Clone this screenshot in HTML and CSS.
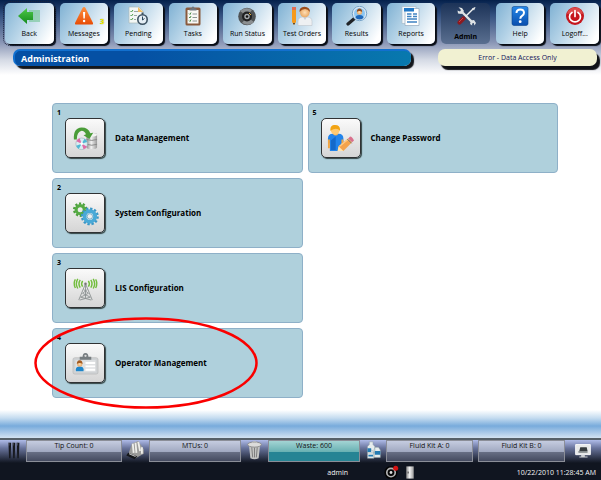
FILE: index.html
```html
<!DOCTYPE html>
<html lang="en">
<head>
<meta charset="utf-8">
<title>Administration</title>
<link rel="stylesheet" href="styles.css">
</head>
<body>
<svg class="defs" aria-hidden="true">
  <defs>
    <linearGradient id="green" x1="0" y1="0" x2="0" y2="1"><stop offset="0" stop-color="#4fc94a"/><stop offset="1" stop-color="#138a1c"/></linearGradient>
    <linearGradient id="orange" x1="0" y1="0" x2="0" y2="1"><stop offset="0" stop-color="#ff9140"/><stop offset="1" stop-color="#e84c05"/></linearGradient>
    <linearGradient id="blue" x1="0" y1="0" x2="0" y2="1"><stop offset="0" stop-color="#2588e8"/><stop offset="1" stop-color="#0a4fae"/></linearGradient>
    <linearGradient id="steel" x1="0" y1="0" x2="1" y2="0"><stop offset="0" stop-color="#8d8d8d"/><stop offset=".45" stop-color="#f2f2f2"/><stop offset="1" stop-color="#999"/></linearGradient>
    <radialGradient id="skin"><stop offset="0" stop-color="#ffdfb5"/><stop offset="1" stop-color="#e9a864"/></radialGradient>
  </defs>
</svg>
<div class="app">
  <header class="top">
    <nav class="toolbar" aria-label="Main">
      <button class="tool focused">
        <svg viewBox="0 0 24 20"><path d="M12 4h11v12H12z" fill="#7fc9a0" opacity=".7"/><path d="M1 10 10 2v4h6v8h-6v4z" fill="url(#green)"/></svg>
        <span>Back</span>
      </button>
      <button class="tool">
        <svg viewBox="0 0 24 20"><path d="M12 1q1 0 1.500 1L21 17q.5 1.500-1 1.500H4Q2.500 18.500 3 17L10.500 2q.5-1 1.500-1z" fill="url(#orange)"/><path d="M11 6h2.200l-.4 6.500h-1.400z" fill="#fff"/><circle cx="12.100" cy="15" r="1.200" fill="#fff"/></svg>
        <span>Messages</span>
        <b class="badge">3</b>
      </button>
      <button class="tool">
        <svg viewBox="0 0 24 20"><path d="M3 1h10l4 4v12H3z" fill="#f3f7f5" stroke="#a9b8b8" stroke-width=".7"/><path d="m12 1 5 5h-5z" fill="#f0bd62"/><path d="m4.500 5 1 1 1.500-2M4.500 9l1 1L7 8M4.500 13l1 1L7 12" stroke="#4a9c48" fill="none"/><path d="M8 5.500h4M8 9.500h3M8 13.500h2" stroke="#9aa5a5"/><path d="M15.500 6.500h2v2h-2z" fill="#3d5262"/><circle cx="16.500" cy="13.500" r="4.700" fill="#e5eef5" stroke="#3d5262" stroke-width="1.600"/><path d="M16.500 10.500v3.500l2-1.500" stroke="#28465c" fill="none"/></svg>
        <span>Pending</span>
      </button>
      <button class="tool">
        <svg viewBox="0 0 24 20"><rect x="4.500" y="1.500" width="15" height="18" rx="1.500" fill="#8a5a3c"/><path d="M6.500 4h11v13.500h-11z" fill="#f8f8f4"/><path d="M8.500 4.500v-2h2q0-2 1.500-2t1.500 2h2v2z" fill="#70767c"/><path d="m8 7.500 1 1 1-2m-2 4.500 1 1 1-2m-2 4.500 1 1 1-2" stroke="#4c8f4a" fill="none"/><path d="M11.500 8H16m-4.500 3.500H16M11.500 15H16" stroke="#8c9494"/></svg>
        <span>Tasks</span>
      </button>
      <button class="tool">
        <svg viewBox="0 0 24 20"><circle cx="12" cy="10.500" r="8.800" fill="#4f5355"/><path d="M5 5q6-5 12-1l-5 6zM7 17l5-6 7 5q-5 5-12 1z" fill="#8c9092"/><circle cx="12" cy="10.500" r="5" fill="#202122"/><circle cx="12" cy="10.500" r="2.700" fill="#a8acae"/><circle cx="12" cy="10.500" r="1.300" fill="#111"/><path d="m14 7 2 2" stroke="#e3ac36"/></svg>
        <span>Run Status</span>
      </button>
      <button class="tool">
        <svg viewBox="0 0 24 20"><path d="M2 3h4v13l-2 3-2-3z" fill="#f59a1c"/><path d="M2 1h4v3H2z" fill="#e36d51"/><path d="m3 17 1 2 1-2z" fill="#333"/><path d="M8 19.500v-4q0-4.500 5-4.500h4q5 0 5 4.500v4z" fill="#eef0f2" stroke="#b9bfc5" stroke-width=".5"/><path d="m13 11 2 3 2-3" fill="#c6ccd3"/><circle cx="14.800" cy="6.500" r="4.800" fill="url(#skin)"/><path d="M9.500 6Q9 1 14.500.8 20 1 20 6q-2-3-5-3-3 0-5.500 3z" fill="#9b4d1b"/></svg>
        <span>Test Orders</span>
      </button>
      <button class="tool">
        <svg viewBox="0 0 24 20"><path d="m10 12-7 6" stroke="#202327" stroke-width="3.200" stroke-linecap="round"/><circle cx="14.500" cy="7.500" r="6.500" fill="#8cc6f2" stroke="#dce8f2" stroke-width="2"/><circle cx="14.500" cy="7.500" r="7.200" fill="none" stroke="#4f88b8" stroke-width=".7"/><path d="M10.500 12q0-3 4-3t4 3q-4 3-8 0z" fill="#1e68ba"/><circle cx="14.500" cy="6" r="2.600" fill="url(#skin)"/><path d="M11.800 6q0-3.500 2.700-3.500T17.200 6q-3-2-5.400 0z" fill="#925020"/></svg>
        <span>Results</span>
      </button>
      <button class="tool">
        <svg viewBox="0 0 24 20"><path d="M3 .5h14v17H3z" fill="#f4f7fa" stroke="#a9bbc9" stroke-width=".7"/><path d="M6 2.500h14v17H6z" fill="#fff" stroke="#93a9bd" stroke-width=".7"/><path d="M5 2h10v3.500H5z" fill="#2379c6"/><path d="M8 8h4.500M8 10.500h4.500M8 13h10M8 16h10m-4-8h4m-4 2.500h4" stroke="#3f83c2" stroke-width="1.400"/></svg>
        <span>Reports</span>
      </button>
      <button class="tool current" aria-current="page">
        <svg viewBox="0 0 24 20"><path d="m8 6 11 11" stroke="#dfe3e5" stroke-width="2.400"/><path d="M4.500 1.200 8 2l2 3-2.500 3L4 7.500 3.500 4.500 6 5.500 7 4zM17 14.500l3-.5 2 3-1.500 2.500-.8-2.500-1.700 0 .2 2.500-2.200-1.500z" fill="#dfe3e5"/><path d="m19.500 2.500-8 8" stroke="#eef0f0" stroke-width="1.500"/><path d="m18 2.500 3-1.500.5.500L20 4.500z" fill="#dfe3e5"/><path d="m9.500 12.500-4 4" stroke="#8d1a20" stroke-width="4.200" stroke-linecap="round"/><path d="m9 12-4 4" stroke="#c94448"/></svg>
        <span>Admin</span>
      </button>
      <button class="tool">
        <svg viewBox="0 0 24 20"><rect x="4" y=".5" width="16" height="19" rx="2" fill="url(#blue)" stroke="#0c458f" stroke-width=".6"/><path d="M8.500 7q0-3.500 3.700-3.500T16 6.800q0 1.800-2 3-1.700 1-1.700 3" fill="none" stroke="#fff" stroke-width="2"/><circle cx="12.200" cy="15.700" r="1.400" fill="#fff"/></svg>
        <span>Help</span>
      </button>
      <button class="tool">
        <svg viewBox="0 0 24 20"><circle cx="12" cy="10" r="9" fill="#c5161d"/><path d="M4 8q1-6 8-6.500Q19 2 20 8q-8-3-16 0z" fill="#dc4a4a"/><path d="M9 6.500q-2.500 1.500-2.500 4.200a5.500 5.200 0 0 0 11 0q0-2.700-2.500-4.200M12 4.500v6" fill="none" stroke="#fff" stroke-width="1.700" stroke-linecap="round"/></svg>
        <span>Logoff...</span>
      </button>
    </nav>
    <div class="titles">
      <h1 class="title">Administration</h1>
      <p class="alert" role="status">Error - Data Access Only</p>
    </div>
  </header>

  <main class="content">
    <div class="tiles">
      <button class="tile">
        <span class="num">1</span>
        <span class="pic"><svg viewBox="0 0 28 28"><path d="M15 10q0-2 5.500-2t5.500 2v13q0 2-5.500 2T15 23z" fill="url(#steel)"/><ellipse cx="20.500" cy="10" rx="5.500" ry="1.800" fill="#f3f3f3"/><path d="M15 15q5.500 2 11 0M15 20q5.500 2 11 0" stroke="#888" fill="none"/><path d="M2 15Q1 3 10 2.500q7 0 9 6l3-.5-4 6.500-6-4 2.500-.8Q13 6 10 6q-5 1-5 9z" fill="#4a9c38"/><circle cx="10" cy="19.500" r="6" fill="#d8eef2" stroke="#98aeb8" stroke-width=".6"/><path d="m10 19.500-5.500-2.700a6 6 0 0 1 3.500-3zM10 19.500l5.500 2.700a6 6 0 0 1-3.500 3z" fill="#df6aa7"/><path d="m10 19.500 3-5.300a6 6 0 0 1 2.700 3.300zM10 19.500l-3 5.300a6 6 0 0 1-2.700-3.300z" fill="#51b7d4"/><circle cx="10" cy="19.500" r="1.500" fill="#fff"/></svg></span>
        <span class="name">Data Management</span>
      </button>
      <button class="tile">
        <span class="num">2</span>
        <span class="pic"><svg viewBox="0 0 28 28"><circle cx="8.500" cy="10" r="6.300" fill="none" stroke="#4c9f3c" stroke-width="2.400" stroke-dasharray="2.200 1.758"/><circle cx="8.500" cy="10" r="4.200" fill="none" stroke="#55aa43" stroke-width="3.200"/><circle cx="18.500" cy="17" r="8" fill="none" stroke="#3a96c6" stroke-width="2.600" stroke-dasharray="2.400 1.789"/><circle cx="18.500" cy="17" r="5.500" fill="#e2edf2" stroke="#49a9d7" stroke-width="4"/><circle cx="18.500" cy="17" r="2.800" fill="#eee" stroke="#3486af" stroke-width=".6"/></svg></span>
        <span class="name">System Configuration</span>
      </button>
      <button class="tile">
        <span class="num">3</span>
        <span class="pic"><svg viewBox="0 0 28 28"><g fill="none" stroke="#8b9090" stroke-width=".9"><path d="m14 9-7 17M14 9l7 17M14 9v15M12 15l5 4-8 4 11 3M16 15l-5 4 8 4-11 3"/></g><circle cx="14" cy="9" r="1.300" fill="#777"/><g fill="none" stroke="#72bd3c" stroke-width="1.500"><path d="M11 6q-2 3 0 6M8.500 5q-2.500 4 0 8M6 4q-3 5 0 10M3.500 4.500q-2.500 4 0 9M17 6q2 3 0 6M19.500 5q2.500 4 0 8M22 4q3 5 0 10M24.500 4.500q2.500 4 0 9"/></g></svg></span>
        <span class="name">LIS Configuration</span>
      </button>
      <button class="tile">
        <span class="num">4</span>
        <span class="pic"><svg viewBox="0 0 28 28"><rect x="1" y="8" width="26" height="17" rx="2" fill="#cfd2d4" stroke="#b3b3b3" stroke-width=".6"/><rect x="3.500" y="10.500" width="21" height="12" fill="#dfe1e3"/><path d="M8 10V7h3q0-4 3-4t3 4h3v3z" fill="#777d80"/><circle cx="14" cy="6" r="1.200" fill="#ddd"/><path d="M4 22v-2q0-3 4-3t4 3v2z" fill="#1f86ca"/><circle cx="8" cy="14.500" r="2.700" fill="url(#skin)"/><path d="M5 14.500q0-4 3-4t3 4q-3-2-6 0z" fill="#a45c22"/><path d="M14 13.500h10M14 17h10m-10 3.500h10" stroke="#fff" stroke-width="2"/></svg></span>
        <span class="name">Operator Management</span>
        <svg class="ring" viewBox="0 0 224 92" aria-hidden="true"><ellipse cx="112" cy="46" rx="110.500" ry="44.500"/></svg>
      </button>
      <button class="tile">
        <span class="num">5</span>
        <span class="pic"><svg viewBox="0 0 28 28"><path d="M1 14q0-5 5-5h6q5 0 5 5v5h-2v8H3v-8H1z" fill="#2284eb"/><path d="M1 15h2v9H1zM15 15h2v5h-2z" fill="#f2a541"/><path d="M6 9q3 4 6 0z" fill="#f2b35b"/><path d="M4 16v10h5V12z" fill="#1369ca"/><circle cx="8.500" cy="5.500" r="4.500" fill="#ffca72"/><path d="M3.500 6Q3-.5 8.500 0 14 0 13.500 6 10 2 3.500 6z" fill="#f2a414"/><path d="m12 22 10-8 4 4-9 9-6 0z" fill="#f4a34b"/><path d="m12 22 5 5-6 0z" fill="#ffe5b2"/><path d="m13 22 10-8" stroke="#ffca82" stroke-width="1.500"/><path d="m22 14 2-2q2 0 4 4l-2 2z" fill="#d9708c"/><path d="m21 14.500 4.500 4.500" stroke="#777"/></svg></span>
        <span class="name">Change Password</span>
      </button>
    </div>
  </main>

  <footer class="bottom">
    <div class="glow"></div>
    <div class="levels">
      <svg viewBox="0 0 26 24"><path d="M8 3h3l-.7 17h-1.600zM12.500 3h3l-.7 17h-1.600zM17 3h3l-.7 17h-1.600z" fill="#17191f"/><path d="M8.500 3v3M13 3v3M17.500 3v3" stroke="#62677a"/></svg>
      <span class="level">Tip Count: 0</span>
      <svg viewBox="0 0 26 24"><path d="m6 13 3-9 7-3 6 9v5l-9 5-7-3z" fill="#9b9b99"/><path d="m10 4 1 10M13 3l1 11M16 2l2 10M20 8v7" stroke="#eeeeea" stroke-width="2"/><path d="m5 14 10 4-3 3-9-4z" fill="#15171a"/><path d="m6 15 7 3" stroke="#ddd"/></svg>
      <span class="level">MTUs: 0</span>
      <svg viewBox="0 0 26 24"><path d="m7 6 1.500 14q4.500 2 9 0L19 6z" fill="#c4c5c3"/><path d="m10 8 1 11M13 8v11M16 8l-1 11" stroke="#777"/><ellipse cx="13" cy="5" rx="7.500" ry="2.800" fill="#dcdcda" stroke="#888"/><path d="M10 3q3-3 6 0" stroke="#c5c5c2" fill="none"/></svg>
      <span class="level waste">Waste: 600</span>
      <svg viewBox="0 0 26 24"><path d="M9 2h4v3l2 2v7H7V7l2-2zM8 11h4l2 3v6H7v-6zM15 8h4l2 3v8h-7v-8z" fill="#e6eced" stroke="#899ca3" stroke-width=".5"/><path d="M7 9h4v4H7zM15 12h6v4h-6zM8 16h5v2H8z" fill="#247bb3"/></svg>
      <span class="level">Fluid Kit A: 0</span>
      <i></i>
      <span class="level">Fluid Kit B: 0</span>
      <svg viewBox="0 0 30 24"><path d="M7 5h16v11H7z" fill="#e6e8e8" stroke="#fff"/><path d="M12 8h7l1 4h-9z" fill="#363b3e"/><path d="M10 12h10v2H10z" fill="#858b8d"/><path d="M13 16h4v2h3v1h-9v-1h2z" fill="#cfd2d5"/></svg>
    </div>
    <div class="session">
      <span class="user">admin</span>
      <span class="marks">
        <svg viewBox="0 0 16 16"><circle cx="8" cy="8" r="7" fill="#050505"/><circle cx="8" cy="8" r="4.500" fill="none" stroke="#b3b3b3" stroke-width="1.800"/><circle cx="8" cy="8" r="1.500" fill="#ddd"/><circle cx="13" cy="3.500" r="2.700" fill="#d31414"/></svg>
        <svg viewBox="0 0 16 16"><path d="M4 1.500h8v13H4z" fill="url(#steel)"/><path d="M6 7v2" stroke="#333"/></svg>
      </span>
      <time>10/22/2010 11:28:45 AM</time>
    </div>
  </footer>
</div>
</body>
</html>
```
FILE: styles.css
```css
* { box-sizing: border-box; }

body {
  margin: 0;
  font-family: "Open Sans", "Noto Sans", sans-serif;
  font-size: 7px;
  line-height: 10px;
  color: #000;
  background: #fff;
}

button { font: inherit; color: inherit; cursor: pointer; }

.defs { position: absolute; width: 0; height: 0; }

.app {
  display: flex;
  flex-direction: column;
  min-height: 100vh;
}

.top {
  padding: 3px 2px 10px 5px;
  background: linear-gradient(#04204b 0, #32507f 15px, #8794b4 42px, #d5dae5 60px, #fff 75px);
}

.toolbar {
  display: grid;
  grid-template-columns: repeat(11, 1fr);
  gap: 6px;
}

.tool {
  position: relative;
  display: flex;
  flex-direction: column;
  align-items: center;
  gap: 3px;
  height: 41px;
  padding: 3px 0 0;
  border: 0;
  border-radius: 5px;
  background: linear-gradient(120deg, #7fb1d3, #b5d3e7 40%, #fff 90%);
  box-shadow: 2px 2px 1px #080c14;
  white-space: nowrap;
}

.tool svg { width: 24px; height: 20px; }

.focused { outline: 1px dotted #17213a; outline-offset: 1px; }

.current {
  gap: 6px;
  background: linear-gradient(#1c3358, #5a6f90);
  box-shadow: none;
  font-weight: 700;
}

.badge {
  position: absolute;
  top: 14px;
  right: 4px;
  color: #f4f000;
  text-shadow: 0 0 1px #7c7c00;
}

.titles {
  display: grid;
  grid-template-columns: 398fr 159fr;
  gap: 27px;
  padding: 5px 2px 0 8px;
}

.title, .alert {
  margin: 0;
  height: 17px;
  border-radius: 7px;
}

.title {
  padding-left: 6px;
  font-size: 9px;
  line-height: 15px;
  color: #fff;
  background: linear-gradient(90deg, #0550a4 30%, #0879ae);
  border-top: 2px solid #1270cf;
  border-left: 2px solid #1270cf;
  box-shadow: 3px 3px 1px #14171c;
}

.alert {
  line-height: 18px;
  text-align: center;
  color: #10125c;
  background: #f1f1d2;
  box-shadow: 3px 4px 1px #101216;
}

.content { flex: 1; padding: 27px 43px 0 52px; }

.tiles {
  display: grid;
  grid-template-columns: 1fr 1fr;
  grid-template-rows: repeat(4, 70px);
  grid-auto-flow: column;
  gap: 5px;
}

.tile {
  position: relative;
  display: grid;
  grid-template-columns: 12px 40px 1fr;
  grid-template-rows: 14px 40px;
  align-content: start;
  align-items: center;
  padding: 0;
  border: 1px solid #8eb0c8;
  border-radius: 4px;
  background: #afd0dc;
  font-size: 8px;
  font-weight: 700;
  text-align: left;
}

.num { padding: 4px 0 0 4px; font-size: 7px; }

.pic {
  grid-area: 2 / 2;
  display: grid;
  place-items: center;
  height: 40px;
  border: 1px solid #303234;
  border-radius: 5px;
  background: linear-gradient(#fafafa, #d5d5d5);
  box-shadow: 1px 1px 1px #344;
}

.pic svg { width: 27px; height: 27px; }

.name { grid-area: 2 / 3; padding-left: 10px; }

.ring {
  position: absolute;
  z-index: 1;
  top: -12px;
  left: -19px;
  width: 224px;
  height: 92px;
  pointer-events: none;
}

.ring ellipse { fill: none; stroke: #fa0000; stroke-width: 2.5px; }

.bottom { background: #101520; }

.glow {
  height: 30px;
  border-bottom: 2px solid #566068;
  background: linear-gradient(#fff, #c5dcf0 8px, #78abdc 16px, #d3e2f1);
}

.levels {
  display: grid;
  grid-template-columns: 26px 96fr 27px 92fr 27px 92fr 26px 87fr 5px 87fr 36px;
  padding-bottom: 3px;
  background: linear-gradient(#afbbe8, #69749c 8px, #101520 23px);
}

.levels svg { width: 100%; height: 22px; }

.level {
  height: 22px;
  border: 1px solid #8b8e98;
  text-align: center;
  color: #111;
  background: linear-gradient(#c5cce0, #a0a8c0 11px, #686f85 11px, #454b60);
}

.waste { background: linear-gradient(#a3d4d4, #67b0b2 11px, #268494 11px, #268494); }

.session {
  display: grid;
  grid-template-columns: 348fr 70px 178fr;
  align-items: center;
  padding-right: 5px;
  height: 15px;
  color: #f3f4f6;
}

.user, .session time { text-align: right; }
.marks { display: flex; justify-content: flex-end; gap: 3px; }
.marks svg { width: 16px; height: 15px; }
```
